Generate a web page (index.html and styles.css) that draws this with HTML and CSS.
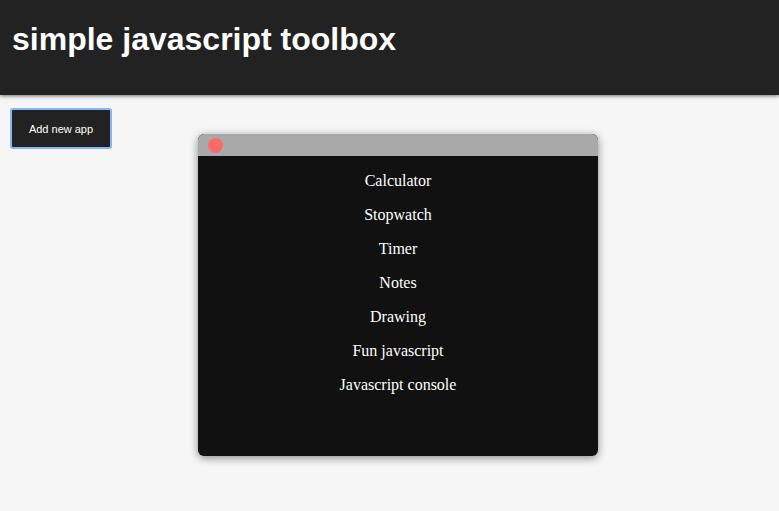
FILE: index.html
```html
<!DOCTYPE html>
<html lang="en">
<head>
<meta charset="utf-8">
<title>simple javascript toolbox</title>
<link rel="stylesheet" href="styles.css">
</head>
<body>
<header class="topbar">
  <h1 class="title">simple javascript toolbox</h1>
</header>
<main class="desktop">
  <button class="add-btn" type="button">Add new app</button>
  <section class="window">
    <div class="window-bar"><span class="close-dot"></span></div>
    <div class="window-body">
      <p class="app-item">Calculator</p>
      <p class="app-item">Stopwatch</p>
      <p class="app-item">Timer</p>
      <p class="app-item">Notes</p>
      <p class="app-item">Drawing</p>
      <p class="app-item">Fun javascript</p>
      <p class="app-item">Javascript console</p>
    </div>
  </section>
</main>
</body>
</html>
```
FILE: styles.css
```css
html, body {
  margin: 0;
  padding: 0;
}
body {
  background: #f6f6f6;
  font-family: "Liberation Sans", Arial, sans-serif;
  min-height: 511px;
}
.topbar {
  box-sizing: border-box;
  height: 95px;
  padding: 21px 12px 0;
  background: #222222;
  box-shadow: 0 1px 4px rgba(0, 0, 0, 0.55);
  position: relative;
  z-index: 1;
}
.title {
  margin: 0;
  font-size: 32px;
  font-weight: bold;
  color: #ffffff;
  line-height: 37px;
}
.desktop {
  position: relative;
  padding: 15px 12px;
}
.add-btn {
  box-sizing: border-box;
  width: 98px;
  height: 37px;
  padding: 0;
  border: none;
  background: #222222;
  color: #ffffff;
  font-family: "Liberation Sans", Arial, sans-serif;
  font-size: 11px;
  box-shadow: 0 0 0 2px #84b7f9;
  border-radius: 1px;
}
.window {
  position: absolute;
  left: 198px;
  top: 39px;
  width: 400px;
  height: 322px;
  border-radius: 6px;
  background: #111111;
  box-shadow: 0 2px 8px rgba(0, 0, 0, 0.45);
  overflow: hidden;
  display: flex;
  flex-direction: column;
}
.window-bar {
  height: 22px;
  background: #a9a9a9;
  display: flex;
  align-items: center;
  padding-left: 10px;
  flex: none;
}
.close-dot {
  width: 15px;
  height: 15px;
  border-radius: 50%;
  background: #ff6868;
  margin-top: 1px;
}
.window-body {
  flex: 1;
  padding: 16px 0 0;
  text-align: center;
}
.app-item {
  margin: 0 0 16px;
  font-family: "Liberation Serif", "Times New Roman", serif;
  font-size: 16px;
  line-height: 18px;
  color: #ffffff;
}
```
